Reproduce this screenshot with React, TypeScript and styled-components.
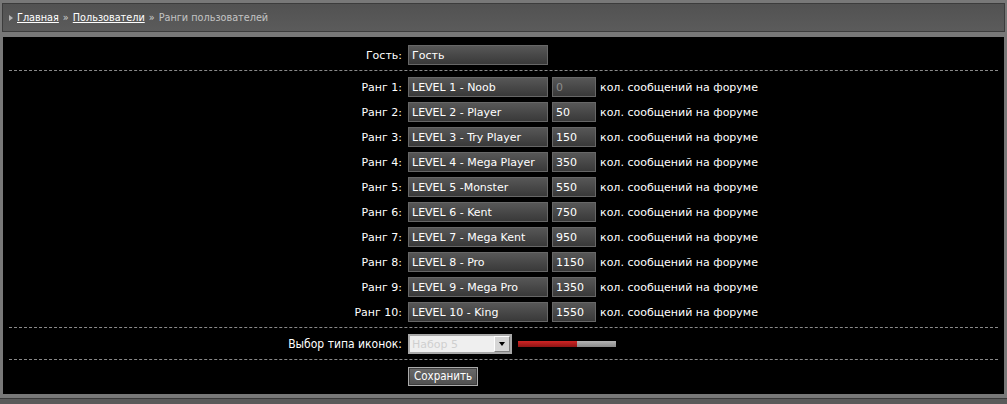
import React, { FC } from 'react';
import styled, { createGlobalStyle } from 'styled-components';

const GlobalStyle = createGlobalStyle`
    html, body {
        margin: 0;
        padding: 0;
        background: #787878;
    }
    body {
        font-family: 'DejaVu Sans', 'Liberation Sans', sans-serif;
        font-size: 11px;
        color: #fff;
    }
`;

const Page = styled.div`
    width: 1007px;
    height: 404px;
    padding-top: 3px;
    box-sizing: border-box;
    display: flex;
    flex-direction: column;
    overflow: hidden;
`;

const Crumbs = styled.div`
    margin: 0 2px;
    height: 29px;
    box-sizing: border-box;
    border: 1px solid #3c3c3c;
    background: linear-gradient(#525252, #5b5b5b);
    display: flex;
    align-items: center;
    padding-left: 6px;
    gap: 4px;
    color: #c4c4c4;
    font-size: 9.7px;
`;

const Arrow = styled.span`
    width: 0;
    height: 0;
    border-top: 3.5px solid transparent;
    border-bottom: 3.5px solid transparent;
    border-left: 4px solid #b5b5b5;
    margin-right: 0;
`;

const CrumbLink = styled.a`
    color: #fff;
    text-decoration: underline;
`;

const Sep = styled.span`
    color: #d0d0d0;
`;

const Panel = styled.div`
    margin: 5px 3px 0;
    height: 357px;
    background: #000;
    padding-top: 8px;
    box-sizing: border-box;
`;

const Section = styled.div<{ $pad?: string }>`
    display: flex;
    flex-direction: column;
    gap: 5px;
    padding: ${({ $pad }) => $pad || '0'};
`;

const Divider = styled.div`
    margin: 5px 6px 6px;
    border-top: 1px dashed #8a8a8a;
`;

const Row = styled.div`
    display: grid;
    grid-template-columns: 399px 1fr;
    column-gap: 6px;
    align-items: center;
    height: 20px;
`;

const Label = styled.label<{ $narrow?: boolean }>`
    text-align: right;
    color: #fff;
    font-family: ${({ $narrow }) =>
        $narrow
            ? "'DejaVu Sans Condensed', 'Liberation Sans Narrow', 'Liberation Sans', sans-serif"
            : "'DejaVu Sans', sans-serif"};
    font-size: ${({ $narrow }) => ($narrow ? '12px' : '11px')};
    white-space: nowrap;
`;

const Fields = styled.div`
    display: flex;
    align-items: center;
    gap: 4px;
`;

const TextBox = styled.input<{ $w: number; $muted?: boolean }>`
    width: ${({ $w }) => $w}px;
    height: 20px;
    box-sizing: border-box;
    margin: 0;
    padding: 0 3px;
    border: 1px solid #676767;
    background: linear-gradient(#575757, #393939);
    color: ${({ $muted }) => ($muted ? '#8c8c8c' : '#fff')};
    font-family: 'DejaVu Sans', sans-serif;
    font-size: 11px;
    outline: none;
`;

const Hint = styled.span`
    color: #fff;
    white-space: nowrap;
`;

const Select = styled.div`
    width: 104px;
    height: 20px;
    box-sizing: border-box;
    border: 2px solid #a8a8a8;
    background: #efefef;
    display: flex;
    align-items: center;
    justify-content: space-between;
    color: #cfcfcf;
    font-size: 11px;
    padding-left: 2px;
`;

const SelectBtn = styled.span`
    width: 16px;
    height: 16px;
    box-sizing: border-box;
    border: 1px solid;
    border-color: #fff #808080 #808080 #fff;
    background: #d6d6d6;
    display: flex;
    align-items: center;
    justify-content: center;
`;

const Caret = styled.span`
    width: 0;
    height: 0;
    border-left: 3.5px solid transparent;
    border-right: 3.5px solid transparent;
    border-top: 4px solid #000;
`;

const Track = styled.div`
    width: 98px;
    height: 6px;
    margin-left: 2px;
    display: flex;
    background: linear-gradient(#b4b4b4, #8a8a8a);
`;

const Fill = styled.div`
    height: 100%;
    background: linear-gradient(#d02525, #8e1414);
`;

const SaveButton = styled.button`
    height: 19px;
    padding: 0 5px;
    margin: 0;
    border: 1px solid #ababab;
    box-shadow: inset 0 0 0 1px #3c3c3c;
    background: linear-gradient(#6a6a6a, #505050);
    color: #fff;
    font-family: 'DejaVu Sans Condensed', 'Liberation Sans', sans-serif;
    font-size: 11.5px;
`;

const Footer = styled.div`
    flex: 1;
    margin-top: 4px;
    border-top: 1px solid #3a3a3a;
    background: #5a5a5a;
`;

const ranks = [
    ['LEVEL 1 - Noob', '0'],
    ['LEVEL 2 - Player', '50'],
    ['LEVEL 3 - Try Player', '150'],
    ['LEVEL 4 - Mega Player', '350'],
    ['LEVEL 5 -Monster', '550'],
    ['LEVEL 6 - Kent', '750'],
    ['LEVEL 7 - Mega Kent', '950'],
    ['LEVEL 8 - Pro', '1150'],
    ['LEVEL 9 - Mega Pro', '1350'],
    ['LEVEL 10 - King', '1550'],
];

const App: FC = () => {
    const level = 0.6;

    return (
        <>
            <GlobalStyle />
            <Page>
                <Crumbs>
                    <Arrow />
                    <CrumbLink>Главная</CrumbLink>
                    <Sep>»</Sep>
                    <CrumbLink>Пользователи</CrumbLink>
                    <Sep>»</Sep>
                    <span>Ранги пользователей</span>
                </Crumbs>
                <Panel>
                    <Section>
                        <Row>
                            <Label>Гость:</Label>
                            <Fields>
                                <TextBox $w={140} defaultValue="Гость" />
                            </Fields>
                        </Row>
                    </Section>
                    <Divider />
                    <Section>
                        {ranks.map(([name, count], i) => (
                            <Row key={name}>
                                <Label>Ранг {i + 1}:</Label>
                                <Fields>
                                    <TextBox $w={140} defaultValue={name} />
                                    <TextBox
                                        $w={44}
                                        $muted={i === 0}
                                        defaultValue={count}
                                    />
                                    <Hint>кол. сообщений на форуме</Hint>
                                </Fields>
                            </Row>
                        ))}
                    </Section>
                    <Divider />
                    <Section>
                        <Row>
                            <Label $narrow>Выбор типа иконок:</Label>
                            <Fields>
                                <Select>
                                    Набор 5
                                    <SelectBtn>
                                        <Caret />
                                    </SelectBtn>
                                </Select>
                                <Track>
                                    <Fill style={{ width: `${level * 100}%` }} />
                                </Track>
                            </Fields>
                        </Row>
                    </Section>
                    <Divider />
                    <Section>
                        <Row>
                            <span />
                            <Fields>
                                <SaveButton>Сохранить</SaveButton>
                            </Fields>
                        </Row>
                    </Section>
                </Panel>
                <Footer />
            </Page>
        </>
    );
};

export default App;
